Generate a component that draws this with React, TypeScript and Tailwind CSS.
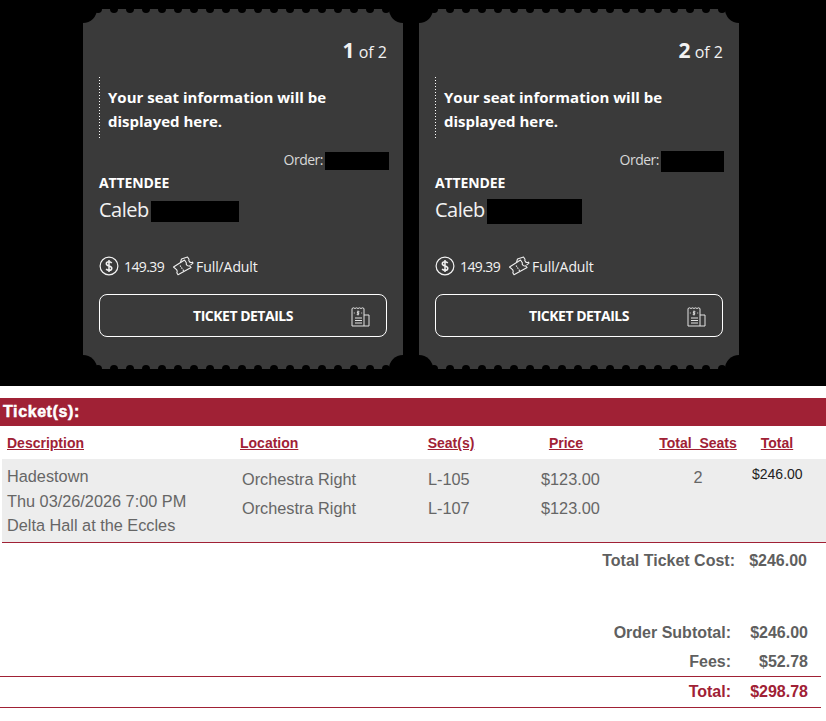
const notches = Array.from({ length: 19 }, (_, i) => i);

const ticketFont = "font-['Open_Sans','Noto_Sans',sans-serif]";
const tableFont = "font-['Liberation_Sans',Arial,sans-serif]";

function DollarIcon() {
  return (
    <svg width="20" height="20" viewBox="0 0 20 20" fill="none" stroke="#f2f2f2" strokeWidth="1.2">
      <circle cx="10" cy="10" r="8.9" />
      <path d="M12.7 7.1c-.5-.9-1.5-1.4-2.7-1.4-1.5 0-2.7.8-2.7 2.100 0 2.900 5.500 1.500 5.500 4.400 0 1.300-1.200 2.100-2.800 2.100-1.300 0-2.300-.6-2.800-1.500M10 3.900v12.200" strokeWidth="1.5" />
    </svg>
  );
}

function TicketIcon() {
  return (
    <svg width="22" height="20" viewBox="0 0 22 20" fill="none" stroke="#eeeeee" strokeWidth="1.100" strokeLinejoin="round">
      <path d="M1.500 11 12.500 4l1.800 2.800a2.500 2.500 0 0 0 3.400 3l1.400 1.700L6 18.700l-1.200-2a2.500 2.500 0 0 0-.8-3.500Z" />
      <path d="m8.500 6.500 1-3.500L15.500 1l1.500 2.300a2.300 2.300 0 0 0 3.400 2.800l.6 1-2.500 2" />
      <path d="m8 9.500 3.800 5.500" strokeDasharray="1.500 1" />
    </svg>
  );
}

function ReceiptIcon() {
  return (
    <svg width="19" height="20" viewBox="0 0 19 20" fill="none" stroke="#e2e2e2" strokeWidth="1">
      <path d="M1 1.500 2.500.8 4 1.500 5.500.8 7 1.500 8.500.8 10 1.500 11.500.8 13 1.500V19H1Z" />
      <path d="M13 8h5v11h-5" />
      <path d="M4 11h7M4 13.500h7M4 16h7" />
      <path d="M7 3.500v5M8.500 4.800H6.400v1.200h1.300v1.300H5.700M2.800 6h1M10.200 6h1" strokeWidth="0.9" />
    </svg>
  );
}

function Ticket({ index, orderBox, nameBox }: { index: number; orderBox: string; nameBox: string }) {
  return (
    <div className={`relative h-[360px] w-[320px] overflow-hidden bg-[#3a3a3a] px-4 text-[#f2f2f2] ${ticketFont}`}>
      <span className="absolute -top-[14px] -left-[14px] size-7 rounded-full bg-black" />
      <span className="absolute -top-[14px] -right-[14px] size-7 rounded-full bg-black" />
      <span className="absolute -bottom-[14px] -left-[14px] size-7 rounded-full bg-black" />
      <span className="absolute -right-[14px] -bottom-[14px] size-7 rounded-full bg-black" />
      <div className="absolute -top-1 left-[11px] flex gap-2">
        {notches.map((n) => <span className="size-2 rounded-full bg-black" key={n} />)}
      </div>
      <div className="absolute -bottom-1 left-[11px] flex gap-2">
        {notches.map((n) => <span className="size-2 rounded-full bg-black" key={n} />)}
      </div>

      <p className="pt-[27px] text-right text-[16px] leading-[28px]">
        <b className="text-[21px] font-bold">{index}</b> of 2
      </p>

      <div className="mt-[11px] h-[63px] bg-[repeating-linear-gradient(to_bottom,#fff_0,#fff_1px,transparent_1px,transparent_3px)] bg-[length:1px_100%] bg-no-repeat pt-[8px] pl-[9px]">
        <p className="w-[240px] text-[15px] leading-[24px] font-bold text-white">Your seat information will be displayed here.</p>
      </div>

      <div className="mt-[12px] -mr-[2px] flex h-[18px] items-center justify-end gap-[2px]">
        <span className="mb-[4px] text-[14px] tracking-[-0.5px] text-[#d8d8d8]">Order:</span>
        <span className={`bg-black ${orderBox}`} />
      </div>

      <p className="mt-[3px] text-[14px] leading-[20px] font-bold tracking-[-0.1px] text-white">ATTENDEE</p>
      <div className="mt-[6px] flex h-[24px] items-center gap-[2px]">
        <span className="mb-[2px] text-[20px] leading-[24px] tracking-[-0.5px]">Caleb</span>
        <span className={`bg-black ${nameBox}`} />
      </div>

      <div className="mt-[31px] flex h-[24px] items-center text-[14px]">
        <DollarIcon />
        <span className="ml-[5px] tracking-[-0.6px]">149.39</span>
        <span className="ml-[8px]"><TicketIcon /></span>
        <span className="ml-[2px] tracking-[-0.1px]">Full/Adult</span>
      </div>

      <button className="relative mt-[16px] flex h-[43px] w-[288px] items-center justify-center rounded-lg border border-white text-[14px] font-bold tracking-[-0.5px] text-white">
        TICKET DETAILS
        <span className="absolute top-[12px] right-[16px]"><ReceiptIcon /></span>
      </button>
    </div>
  );
}

function SummaryRow({ label, value, valueWidth, className }: { label: string; value: string; valueWidth: string; className: string }) {
  return (
    <div className={`flex items-center justify-end text-[16px] font-bold ${className}`}>
      <span>{label}</span>
      <span className={`text-right ${valueWidth}`}>{value}</span>
    </div>
  );
}

const headClass = "text-[14px] font-bold text-[#a02135] underline";

export default function App() {
  return (
    <div className="h-[721px] w-[826px] overflow-hidden bg-white">
      <div className="flex h-[386px] gap-4 bg-black pt-[9px] pl-[83px]">
        <Ticket index={1} orderBox="h-[18px] w-[64px]" nameBox="h-[21px] w-[88px]" />
        <Ticket index={2} orderBox="h-[21px] w-[63px] mr-[1px]" nameBox="h-[25px] w-[95px]" />
      </div>

      <div className={tableFont}>
        <div className="mt-[12px] flex h-[28px] items-center bg-[#a02135] pl-[3px] text-[16px] font-bold tracking-[0.6px] text-white [-webkit-text-stroke:0.5px_white]">Ticket(s):</div>

        <div className="grid h-[33px] grid-cols-[238px_176px_74px_156px_108px_50px_24px] items-center pt-[2px] text-center">
          <span className={`pl-[7px] text-left ${headClass}`}>Description</span>
          <span className={`pl-[2px] text-left ${headClass}`}>Location</span>
          <span className={headClass}>Seat(s)</span>
          <span className={headClass}>Price</span>
          <span className={headClass}>Total_Seats</span>
          <span className={headClass}>Total</span>
        </div>

        <div className="ml-[2px] grid h-[84px] grid-cols-[236px_176px_74px_156px_108px_50px_24px] border-b border-[#a02135] bg-[#ededed] text-[16.300px] text-[#666]">
          <div className="pt-[5px] pl-[5px] leading-[24.500px]">
            <p>Hadestown</p>
            <p>Thu 03/26/2026 7:00 PM</p>
            <p>Delta Hall at the Eccles</p>
          </div>
          <div className="pt-[6px] pl-[4px] leading-[29px]">
            <p>Orchestra Right</p>
            <p>Orchestra Right</p>
          </div>
          <div className="pt-[6px] pl-[14px] leading-[29px]">
            <p>L-105</p>
            <p>L-107</p>
          </div>
          <div className="pt-[6px] pl-[53px] leading-[29px]">
            <p>$123.00</p>
            <p>$123.00</p>
          </div>
          <div className="pt-[6px] text-center leading-[24px]">2</div>
          <div className="pt-[7px] text-center text-[14px] leading-[16px] text-[#222]">$246.00</div>
        </div>

        <div className="text-[#5f5f5f]">
          <SummaryRow label="Total Ticket Cost:" value="$246.00" valueWidth="w-[72px]" className="h-[35px] pr-[19px]" />
          <div className="mt-[40px]">
            <SummaryRow label="Order Subtotal:" value="$246.00" valueWidth="w-[77px]" className="h-[30px] pr-[18px]" />
          </div>
          <SummaryRow label="Fees:" value="$52.78" valueWidth="w-[77px]" className="h-[28px] pr-[18px]" />
          <div className="mr-[5px] border-t border-b border-[#a02135] pr-[13px] text-[#a02135]">
            <SummaryRow label="Total:" value="$298.78" valueWidth="w-[77px]" className="h-[30px]" />
          </div>
        </div>
      </div>
    </div>
  );
}
